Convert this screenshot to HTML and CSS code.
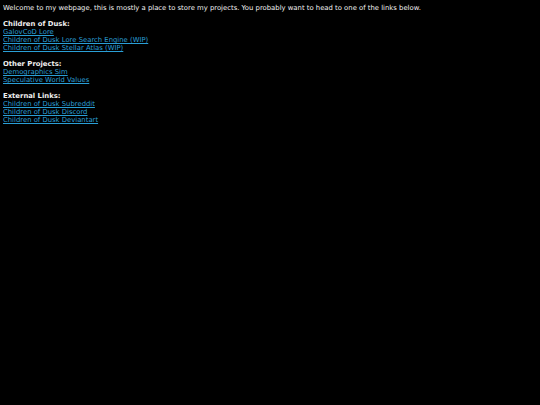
FILE: index.html
```html
<!DOCTYPE html>
<html>
<head>
<meta charset="utf-8">
<link rel="stylesheet" href="styles.css">
</head>
<body>
<p class="intro">Welcome to my webpage, this is mostly a place to store my projects. You probably want to head to one of the links below.</p>
<div class="section">
<div class="heading">Children of Dusk:</div>
<a href="#">GalovCoD Lore</a>
<a href="#">Children of Dusk Lore Search Engine (WIP)</a>
<a href="#">Children of Dusk Stellar Atlas (WIP)</a>
</div>
<div class="section">
<div class="heading">Other Projects:</div>
<a href="#">Demographics Sim</a>
<a href="#">Speculative World Values</a>
</div>
<div class="section">
<div class="heading">External Links:</div>
<a href="#">Children of Dusk Subreddit</a>
<a href="#">Children of Dusk Discord</a>
<a href="#">Children of Dusk Deviantart</a>
</div>
</body>
</html>
```
FILE: styles.css
```css
html, body {
  background: #000;
}
body {
  margin: 4px 3px;
  color: #f0f0f0;
  font-family: "DejaVu Sans", Verdana, sans-serif;
  font-size: 6.85px;
  line-height: 8px;
}
.intro {
  margin: 0 0 8px 0;
}
.section {
  display: flex;
  flex-direction: column;
  align-items: flex-start;
  margin-bottom: 8px;
}
.heading {
  font-weight: bold;
}
a {
  color: #2a9fd6;
  text-decoration: underline;
}
```
